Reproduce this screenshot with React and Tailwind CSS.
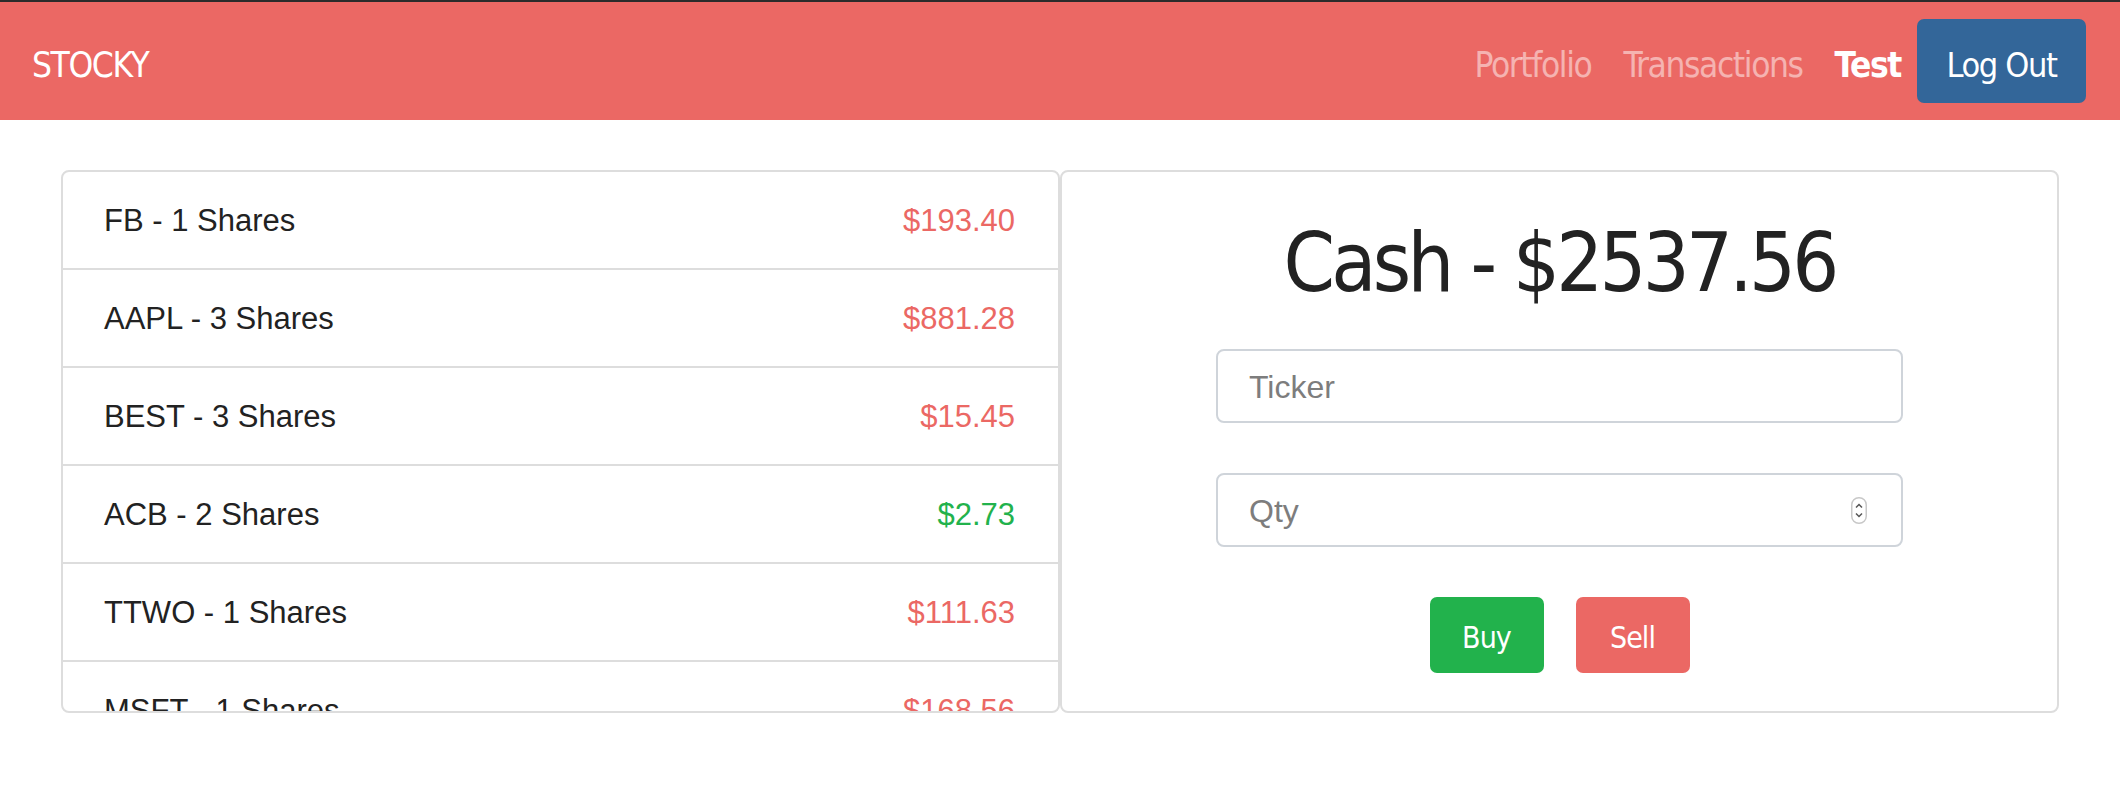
import React from 'react';

const narrow = "font-['DejaVu_Sans_Condensed','DejaVu_Sans',sans-serif] font-stretch-condensed";
const body = "font-['Liberation_Sans',Arial,sans-serif]";

const holdings = [
  { ticker: 'FB', qty: 1, price: '$193.40', up: false },
  { ticker: 'AAPL', qty: 3, price: '$881.28', up: false },
  { ticker: 'BEST', qty: 3, price: '$15.45', up: false },
  { ticker: 'ACB', qty: 2, price: '$2.73', up: true },
  { ticker: 'TTWO', qty: 1, price: '$111.63', up: false },
  { ticker: 'MSFT', qty: 1, price: '$168.56', up: false },
];

const Navbar = () => (
  <div>
    <div className="h-[2px] bg-[#2b2b2b]" />
    <nav className={`h-[118px] bg-[#eb6864] flex items-center justify-between pl-[32px] pr-[34px] ${narrow}`}>
      <span className="pt-[8px] text-[35px] text-white tracking-[-0.04em]">STOCKY</span>
      <div className="flex items-center">
        <a className="pt-[8px] px-[16px] text-[35px] text-white/50 tracking-[-0.04em]">Portfolio</a>
        <a className="pt-[8px] px-[16px] text-[35px] text-white/50 tracking-[-0.04em]">Transactions</a>
        <a className="pt-[8px] px-[16px] text-[35px] text-white font-bold tracking-[-0.04em]">Test</a>
        <button className="w-[169px] h-[84px] pt-[8px] rounded-[7px] bg-[#336699] text-white text-[34px] tracking-[-0.04em]">
          Log Out
        </button>
      </div>
    </nav>
  </div>
);

const HoldingsList = () => (
  <div className={`h-[543px] overflow-hidden border-2 border-[#dddddd] rounded-[8px] ${body}`}>
    {holdings.map((h) => (
      <div
        key={h.ticker}
        className="flex items-center justify-between pl-[41px] pr-[43px] pt-[26px] pb-[24px] border-b-2 border-[#dddddd] text-[31px] leading-[46px]"
      >
        <span className="text-[#222222]">{h.ticker} - {h.qty} Shares</span>
        <span className={h.up ? 'text-[#22b24c]' : 'text-[#eb6864]'}>{h.price}</span>
      </div>
    ))}
  </div>
);

const TradePanel = () => (
  <div className="h-[543px] border-2 border-[#dddddd] rounded-[8px] flex flex-col items-center pt-[50px]">
    <h1 className={`text-[82px] leading-none text-[#222222] tracking-[-0.045em] ${narrow}`}>Cash - $2537.56</h1>
    <input
      placeholder="Ticker"
      className={`mt-[45px] w-[687px] h-[74px] rounded-[8px] border-2 border-[#cfd4da] px-[31px] pt-[2px] text-[32px] placeholder:text-[#7d7d7d] ${body}`}
    />
    <div className="relative mt-[50px]">
      <input
        placeholder="Qty"
        className={`w-[687px] h-[74px] rounded-[8px] border-2 border-[#cfd4da] px-[31px] pt-[2px] text-[32px] placeholder:text-[#7d7d7d] ${body}`}
      />
      <svg className="absolute right-[36px] top-[24px]" width="16" height="27" viewBox="0 0 16 27">
        <rect x="0.75" y="0.75" width="14.5" height="25.5" rx="7" fill="#fff" stroke="#c8c8c8" strokeWidth="1.5" />
        <path d="M5 10.5l3-3 3 3" fill="none" stroke="#555" strokeWidth="1.5" />
        <path d="M5 16.5l3 3 3-3" fill="none" stroke="#555" strokeWidth="1.5" />
      </svg>
    </div>
    <div className={`mt-[50px] flex gap-[32px] ${narrow}`}>
      <button className="w-[114px] h-[76px] pt-[4px] rounded-[7px] bg-[#22b24c] text-white text-[30px] tracking-[-0.03em]">Buy</button>
      <button className="w-[114px] h-[76px] pt-[4px] rounded-[7px] bg-[#eb6864] text-white text-[30px] tracking-[-0.03em]">Sell</button>
    </div>
  </div>
);

export default function App() {
  return (
    <div className="min-h-screen bg-white">
      <Navbar />
      <div className="px-[61px] pt-[50px] grid grid-cols-2">
        <HoldingsList />
        <TradePanel />
      </div>
    </div>
  );
}
